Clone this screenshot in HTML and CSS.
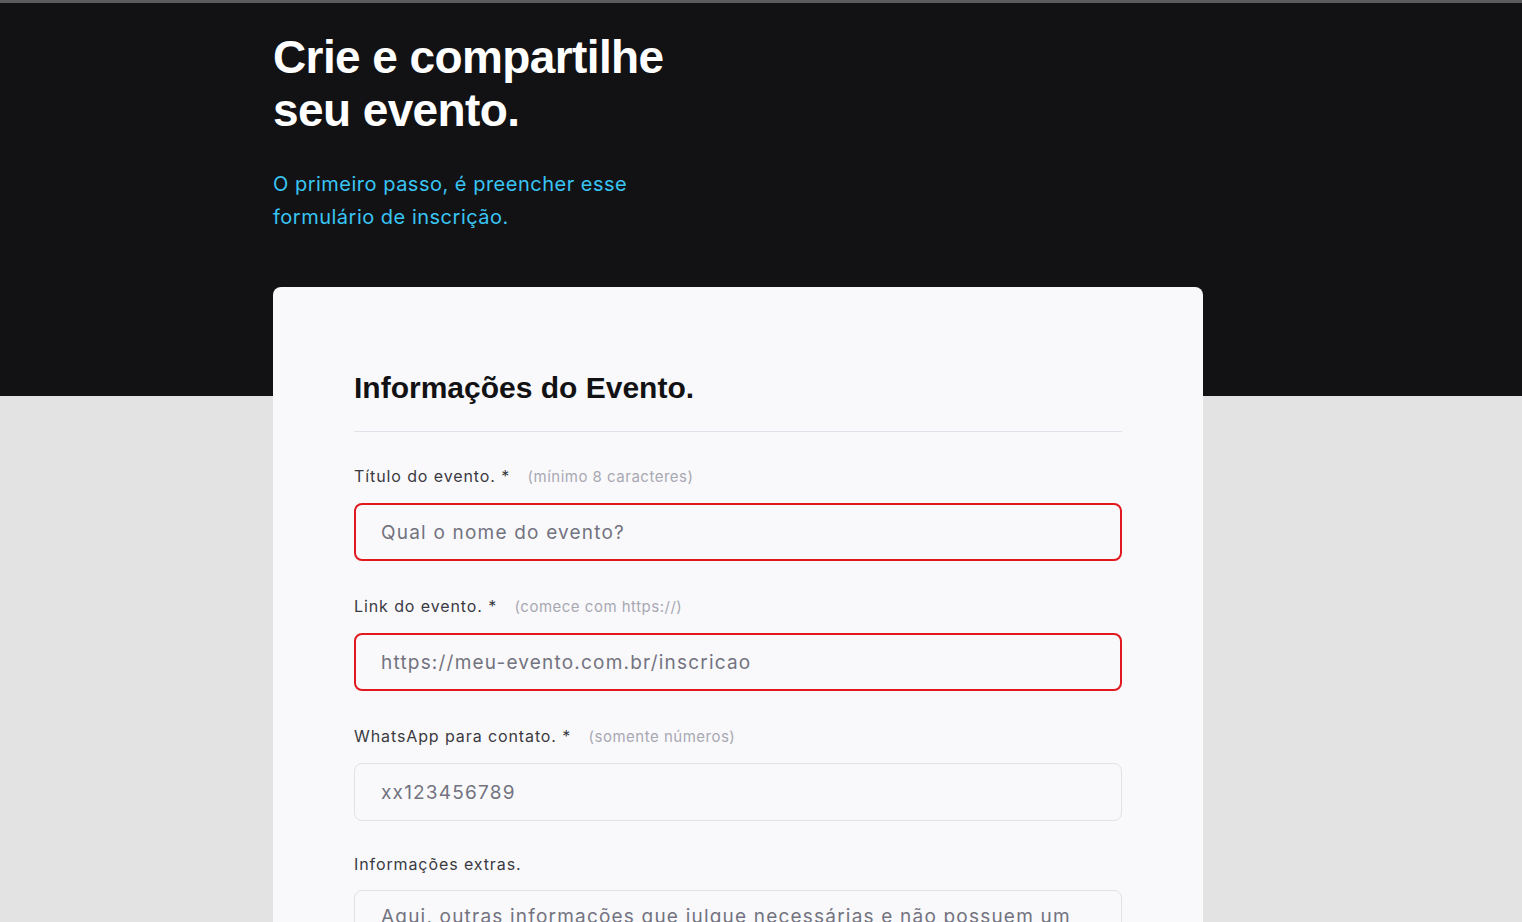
FILE: index.html
```html
<!DOCTYPE html>
<html lang="pt-BR">
<head>
<meta charset="utf-8">
<title>Crie e compartilhe seu evento</title>
<link rel="stylesheet" href="styles.css">
</head>
<body>
<div class="topline"></div>
<header class="hero">
  <div class="container">
    <h1 class="hero-title">Crie e compartilhe<br>seu evento.</h1>
    <p class="hero-sub">O primeiro passo, é preencher esse<br>formulário de inscrição.</p>
  </div>
</header>
<main class="main">
  <div class="container">
    <form class="card">
      <h2 class="card-title">Informações do Evento.</h2>
      <div class="divider"></div>
      <div class="field">
        <label class="label">Título do evento. * <span class="hint">(mínimo 8 caracteres)</span></label>
        <input class="input invalid" type="text" placeholder="Qual o nome do evento?">
      </div>
      <div class="field">
        <label class="label">Link do evento. * <span class="hint">(comece com https://)</span></label>
        <input class="input invalid" type="text" placeholder="https://meu-evento.com.br/inscricao">
      </div>
      <div class="field">
        <label class="label">WhatsApp para contato. * <span class="hint">(somente números)</span></label>
        <input class="input" type="text" placeholder="xx123456789">
      </div>
      <div class="field field-last">
        <label class="label">Informações extras.</label>
        <textarea class="input textarea" placeholder="Aqui, outras informações que julgue necessárias e não possuem um campo específico."></textarea>
      </div>
    </form>
  </div>
</main>
</body>
</html>
```
FILE: styles.css
```css
* { box-sizing: border-box; }
html, body { margin: 0; padding: 0; }
body {
  background: #e3e3e4;
  font-family: "Inter", "Lato", sans-serif;
  overflow: hidden;
}
.topline { height: 3px; background: #5b5b5d; }
.container { width: 976px; margin: 0 auto; }
.hero {
  background: #121214;
  height: 393px;
  padding-top: 28px;
}
.hero-title {
  margin: 0;
  color: #ffffff;
  font-family: "Liberation Sans", Arial, sans-serif;
  font-weight: 700;
  font-size: 46px;
  line-height: 53px;
  letter-spacing: -0.6px;
}
.hero-sub {
  margin: 31px 0 0;
  color: #38c5f4;
  font-size: 20px;
  line-height: 33px;
  letter-spacing: 0.5px;
}
.main { margin-top: -109px; }
.card {
  width: 930px;
  background: #f9f9fb;
  border-radius: 8px;
  padding: 83px 81px 40px;
  min-height: 700px;
}
.card-title {
  margin: 0;
  font-family: "Liberation Sans", Arial, sans-serif;
  font-weight: 700;
  font-size: 30px;
  line-height: 36px;
  color: #121214;
}
.divider {
  height: 1px;
  background: #e1e1e9;
  margin: 25px 0 32px;
}
.field { display: flex; flex-direction: column; margin-bottom: 33px; }
.field-last { margin-top: -2px; }
.label {
  font-size: 16px;
  line-height: 24px;
  color: #3a3a42;
  margin-bottom: 14px;
  letter-spacing: 0.9px;
}
.hint {
  margin-left: 12px;
  font-size: 15px;
  color: #a8a8b3;
  letter-spacing: 0.5px;
}
.input {
  height: 58px;
  width: 100%;
  border: 1px solid #e1e1e6;
  border-radius: 8px;
  background: #f9f9fb;
  padding: 0 26px;
  font-family: inherit;
  font-size: 19px;
  letter-spacing: 1.2px;
  color: #121214;
  outline: none;
}
.input::placeholder { color: #737380; }
.input.invalid { border: 2px solid #e1191e; padding: 0 25px; }
.textarea {
  height: 120px;
  padding-top: 12px;
  resize: none;
  line-height: 28px;
}
```
